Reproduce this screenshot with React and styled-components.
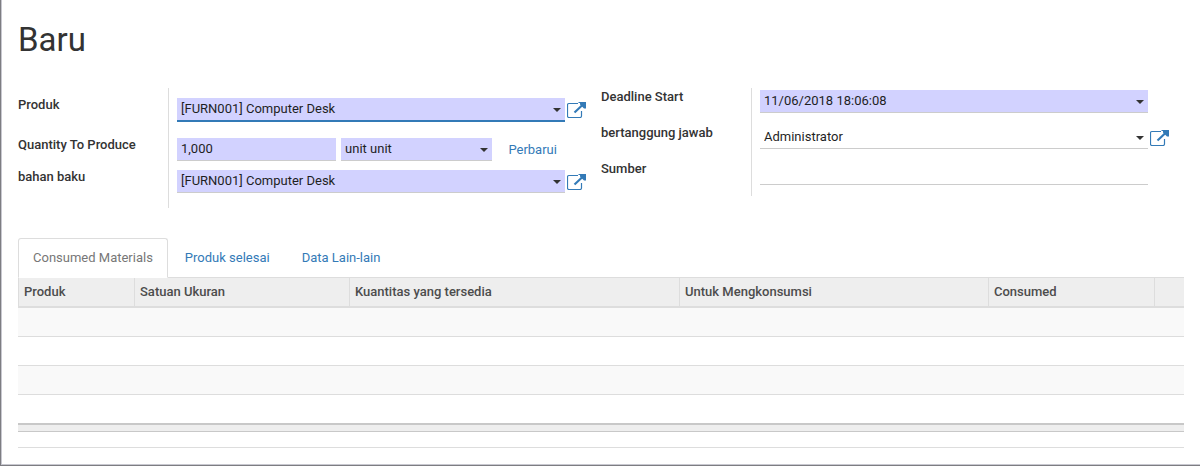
import React from "react";
import styled, { createGlobalStyle } from "styled-components";

const link = "#337ab7";

const GlobalStyle = createGlobalStyle`
  *, *::before, *::after { box-sizing: border-box; }
  body {
    margin: 0;
    background: #fff;
    color: #333;
    font-family: Roboto, "Liberation Sans", sans-serif;
    font-size: 13px;
    line-height: 18px;
  }
  input, select, button { font: inherit; }
`;

const Sheet = styled.main`
  min-height: 100vh;
  padding: 20px 16px 17px 17px;
  border-left: 1px solid #7d7d82;
  border-bottom: 1px solid #7d7d82;
  box-shadow: inset 1px -1px 0 #c8c8d0;
`;

const Title = styled.h1`
  margin: 0 0 28px;
  font-size: 33px;
  line-height: 40px;
  font-weight: 400;
`;

const Groups = styled.form`
  display: grid;
  grid-template-columns: 1fr 1fr;
  align-items: start;
`;

const Group = styled.div`
  display: flex;
  flex-direction: column;
`;

const Row = styled.div`
  display: flex;
  min-height: ${(p) => p.$height}px;
`;

const Label = styled.label`
  flex: 0 0 150px;
  padding-top: ${(p) => (p.$inset ? 8 : 0)}px;
  font-weight: 500;
`;

const Value = styled.div`
  flex: 1;
  min-width: 0;
  display: flex;
  align-items: flex-start;
  padding: ${(p) => (p.$inset ? 10 : 2)}px 0 0 8px;
  border-left: 1px solid #ddd;
`;

const Control = styled.div`
  position: relative;
  flex: ${(p) => (p.$basis ? `0 0 ${p.$basis}` : "1")};
  min-width: 0;
  margin-right: ${(p) => p.$gap || 0}px;

  input, select {
    display: block;
    appearance: none;
    width: 100%;
    height: ${(p) => (p.$active ? 24 : 23)}px;
    padding: 0 20px 0 4px;
    border: 0;
    border-bottom: ${(p) => (p.$active ? `2px solid ${link}` : "1px solid #ccc")};
    border-radius: 0;
    background: ${(p) => (p.$required ? "#d2d2ff" : "transparent")};
    color: #1f1f1f;
    outline: none;
  }

  input { padding-bottom: 2px; }
`;

const CaretSvg = styled.svg`
  position: absolute;
  top: 10px;
  right: 4px;
  pointer-events: none;
`;

const Caret = () => (
  <CaretSvg width="8" height="4" viewBox="0 0 8 4" aria-hidden="true">
    <path d="M0 0H8L4 4Z" fill="#333" />
  </CaretSvg>
);

const Side = styled.div`
  flex: 0 0 36px;
  padding: 4px 0 0 2px;
`;

const QuantityLine = styled.div`
  flex: 1;
  display: flex;
`;

const IconButton = styled.button`
  display: block;
  padding: 0;
  border: 0;
  background: none;
  color: ${link};
  cursor: pointer;
`;

const TextButton = styled(IconButton)`
  margin-left: 16px;
  line-height: 22px;
`;

const OpenRecord = ({ name }) => (
  <Side>
    <IconButton type="button" aria-label={`Open ${name}`}>
      <svg width="19" height="16" viewBox="0 0 19 16" fill="none" display="block">
        <path
          d="M11 1.5H2Q.5 1.5 .5 3V14Q.5 15.5 2 15.5H13Q14.5 15.5 14.5 14V9"
          stroke="currentColor"
          strokeWidth="1.2"
        />
        <path d="M7.5 10.5L16 2.5" stroke="currentColor" strokeWidth="2.2" />
        <path d="M11.5 0H19V6.5H17L15.5 5L13 2.5V1H11.5Z" fill="currentColor" />
      </svg>
    </IconButton>
  </Side>
);

const Choice = ({ id, value, label, ...rest }) => (
  <Control {...rest}>
    <select id={id} aria-label={label} defaultValue={value}>
      <option>{value}</option>
    </select>
    <Caret />
  </Control>
);

const Tabs = styled.div`
  display: flex;
  gap: 2px;
  margin-top: 30px;
  border-bottom: 1px solid #ddd;
`;

const Tab = styled.button`
  height: 40px;
  margin-bottom: -1px;
  padding: 0 14px;
  border: 1px solid ${(p) => (p.$active ? "#ddd" : "transparent")};
  border-bottom-color: ${(p) => (p.$active ? "#fff" : "transparent")};
  border-radius: 3px 3px 0 0;
  background: ${(p) => (p.$active ? "#fff" : "transparent")};
  color: ${(p) => (p.$active ? "#777" : link)};
  cursor: pointer;
`;

const Table = styled.table`
  width: 100%;
  table-layout: fixed;
  border-spacing: 0;

  td { padding: 0; }
`;

const HeadCell = styled.th`
  width: ${(p) => p.$width}px;
  height: 30px;
  padding: 0 5px;
  border-left: 1px solid #ddd;
  border-bottom: 2px solid #ddd;
  background: #eee;
  color: #4c4c4c;
  font-weight: 500;
  text-align: left;
`;

const BodyRow = styled.tr`
  td {
    height: 29px;
    border-bottom: 1px solid #ddd;
  }
  &:nth-child(odd) td { background: #f9f9f9; }
  &:last-child td { height: 28px; border-bottom: 0; }
`;

const FootCell = styled.td`
  height: 9px;
  border-top: 2px solid #c8c8c8;
  border-bottom: 1px solid #c8c8c8;
  background: #eee;
`;

const Rule = styled.hr`
  margin: 15px 0 0;
  border: 0;
  border-top: 1px solid #ddd;
`;

const tabs = ["Consumed Materials", "Produk selesai", "Data Lain-lain"];
const columns = [
  ["Produk", 116],
  ["Satuan Ukuran", 215],
  ["Kuantitas yang tersedia", 330],
  ["Untuk Mengkonsumsi", 309],
  ["Consumed", 166],
  ["", 30],
];

export default function App() {
  return (
    <>
      <GlobalStyle />
      <Sheet>
        <Title>Baru</Title>
        <Groups>
          <Group>
            <Row $height={48}>
              <Label htmlFor="product" $inset>Produk</Label>
              <Value $inset>
                <Choice id="product" value="[FURN001] Computer Desk" $required $active />
                <OpenRecord name="Produk" />
              </Value>
            </Row>
            <Row $height={32}>
              <Label htmlFor="quantity">Quantity To Produce</Label>
              <Value>
                <QuantityLine>
                  <Control $required $basis="41%" $gap={5}>
                    <input id="quantity" defaultValue="1,000" />
                  </Control>
                  <Choice id="unit" label="Unit" value="unit unit" $required $basis="39%" />
                  <TextButton type="button">Perbarui</TextButton>
                </QuantityLine>
                <Side />
              </Value>
            </Row>
            <Row $height={40}>
              <Label htmlFor="bom">bahan baku</Label>
              <Value>
                <Choice id="bom" value="[FURN001] Computer Desk" $required />
                <OpenRecord name="bahan baku" />
              </Value>
            </Row>
          </Group>
          <Group>
            <Row $height={36}>
              <Label htmlFor="deadline">Deadline Start</Label>
              <Value>
                <Control $required>
                  <input id="deadline" defaultValue="11/06/2018 18:06:08" />
                  <Caret />
                </Control>
                <Side />
              </Value>
            </Row>
            <Row $height={36}>
              <Label htmlFor="responsible">bertanggung jawab</Label>
              <Value>
                <Choice id="responsible" value="Administrator" />
                <OpenRecord name="bertanggung jawab" />
              </Value>
            </Row>
            <Row $height={36}>
              <Label htmlFor="source">Sumber</Label>
              <Value>
                <Control>
                  <input id="source" />
                </Control>
                <Side />
              </Value>
            </Row>
          </Group>
        </Groups>
        <Tabs role="tablist">
          {tabs.map((name, i) => (
            <Tab key={name} type="button" role="tab" aria-selected={i === 0} $active={i === 0}>
              {name}
            </Tab>
          ))}
        </Tabs>
        <Table>
          <thead>
            <tr>
              {columns.map(([name, width]) => (
                <HeadCell key={name} $width={width}>{name}</HeadCell>
              ))}
            </tr>
          </thead>
          <tbody>
            {[0, 1, 2, 3].map((n) => (
              <BodyRow key={n}><td colSpan={6} /></BodyRow>
            ))}
          </tbody>
          <tfoot>
            <tr><FootCell colSpan={6} /></tr>
          </tfoot>
        </Table>
        <Rule />
      </Sheet>
    </>
  );
}
